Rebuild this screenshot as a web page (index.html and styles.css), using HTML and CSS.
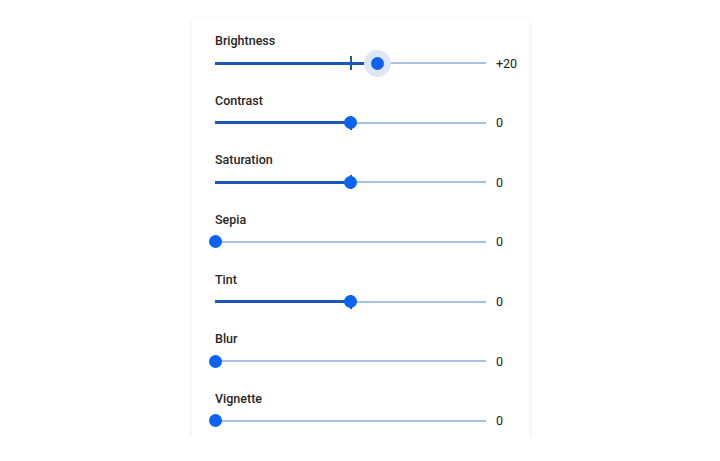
FILE: index.html
```html
<!DOCTYPE html>
<html lang="en">
<head>
    <meta charset="UTF-8">
    <title>Image Adjustments</title>
    <link rel="stylesheet" href="styles.css">
</head>
<body>
    <div class="card">
        <div class="control">
            <div class="label">Brightness</div>
            <div class="slider-row">
                <div class="slider bipolar focused" style="--v: 60%">
                    <div class="track"></div>
                    <div class="fill"></div>
                    <div class="tick"></div>
                    <div class="thumb"></div>
                </div>
                <span class="value">+20</span>
            </div>
        </div>
        <div class="control">
            <div class="label">Contrast</div>
            <div class="slider-row">
                <div class="slider bipolar" style="--v: 50%">
                    <div class="track"></div>
                    <div class="fill"></div>
                    <div class="tick"></div>
                    <div class="thumb"></div>
                </div>
                <span class="value">0</span>
            </div>
        </div>
        <div class="control">
            <div class="label">Saturation</div>
            <div class="slider-row">
                <div class="slider bipolar" style="--v: 50%">
                    <div class="track"></div>
                    <div class="fill"></div>
                    <div class="tick"></div>
                    <div class="thumb"></div>
                </div>
                <span class="value">0</span>
            </div>
        </div>
        <div class="control">
            <div class="label">Sepia</div>
            <div class="slider-row">
                <div class="slider" style="--v: 0%">
                    <div class="track"></div>
                    <div class="fill"></div>
                    <div class="thumb"></div>
                </div>
                <span class="value">0</span>
            </div>
        </div>
        <div class="control">
            <div class="label">Tint</div>
            <div class="slider-row">
                <div class="slider bipolar" style="--v: 50%">
                    <div class="track"></div>
                    <div class="fill"></div>
                    <div class="tick"></div>
                    <div class="thumb"></div>
                </div>
                <span class="value">0</span>
            </div>
        </div>
        <div class="control">
            <div class="label">Blur</div>
            <div class="slider-row">
                <div class="slider" style="--v: 0%">
                    <div class="track"></div>
                    <div class="fill"></div>
                    <div class="thumb"></div>
                </div>
                <span class="value">0</span>
            </div>
        </div>
        <div class="control">
            <div class="label">Vignette</div>
            <div class="slider-row">
                <div class="slider" style="--v: 0%">
                    <div class="track"></div>
                    <div class="fill"></div>
                    <div class="thumb"></div>
                </div>
                <span class="value">0</span>
            </div>
        </div>
    </div>
</body>
</html>
```

FILE: styles.css
```css
body {
    margin: 0;
    background: #fff;
    font-family: Roboto, "Noto Sans", Arial, sans-serif;
    color: #222;
}
.card {
    width: 337px;
    box-sizing: border-box;
    margin: 19px 0 0 192px;
    padding: 14px 23px 5px;
    background: #fff;
    box-shadow: 0 1px 6px rgba(0, 0, 0, 0.09);
    display: flex;
    flex-direction: column;
    gap: 17.65px;
}
.label {
    font-size: 12.5px;
    line-height: 16px;
    font-weight: 500;
    color: #262626;
}
.slider-row {
    display: flex;
    align-items: center;
    gap: 10px;
    margin-top: 2px;
    height: 24px;
}
.slider {
    position: relative;
    flex: none;
    width: 271px;
    height: 24px;
}
.track {
    position: absolute;
    left: 0;
    right: 0;
    top: 11px;
    height: 2px;
    background: #a9c0e6;
}
.fill {
    position: absolute;
    left: 0;
    width: var(--v);
    top: 10.5px;
    height: 3px;
    background: #1a58b8;
}
.tick {
    position: absolute;
    left: 50%;
    top: 5px;
    width: 2px;
    height: 14px;
    margin-left: -1px;
    background: #1a58b8;
}
.thumb {
    position: absolute;
    left: var(--v);
    top: 12px;
    width: 13px;
    height: 13px;
    margin: -6.5px 0 0 -6.5px;
    border-radius: 50%;
    background: #0b63ef;
}
.focused .thumb {
    box-shadow: 0 0 0 7px #dfe7f7;
}
.value {
    font-size: 12.5px;
    color: #222;
}
```
